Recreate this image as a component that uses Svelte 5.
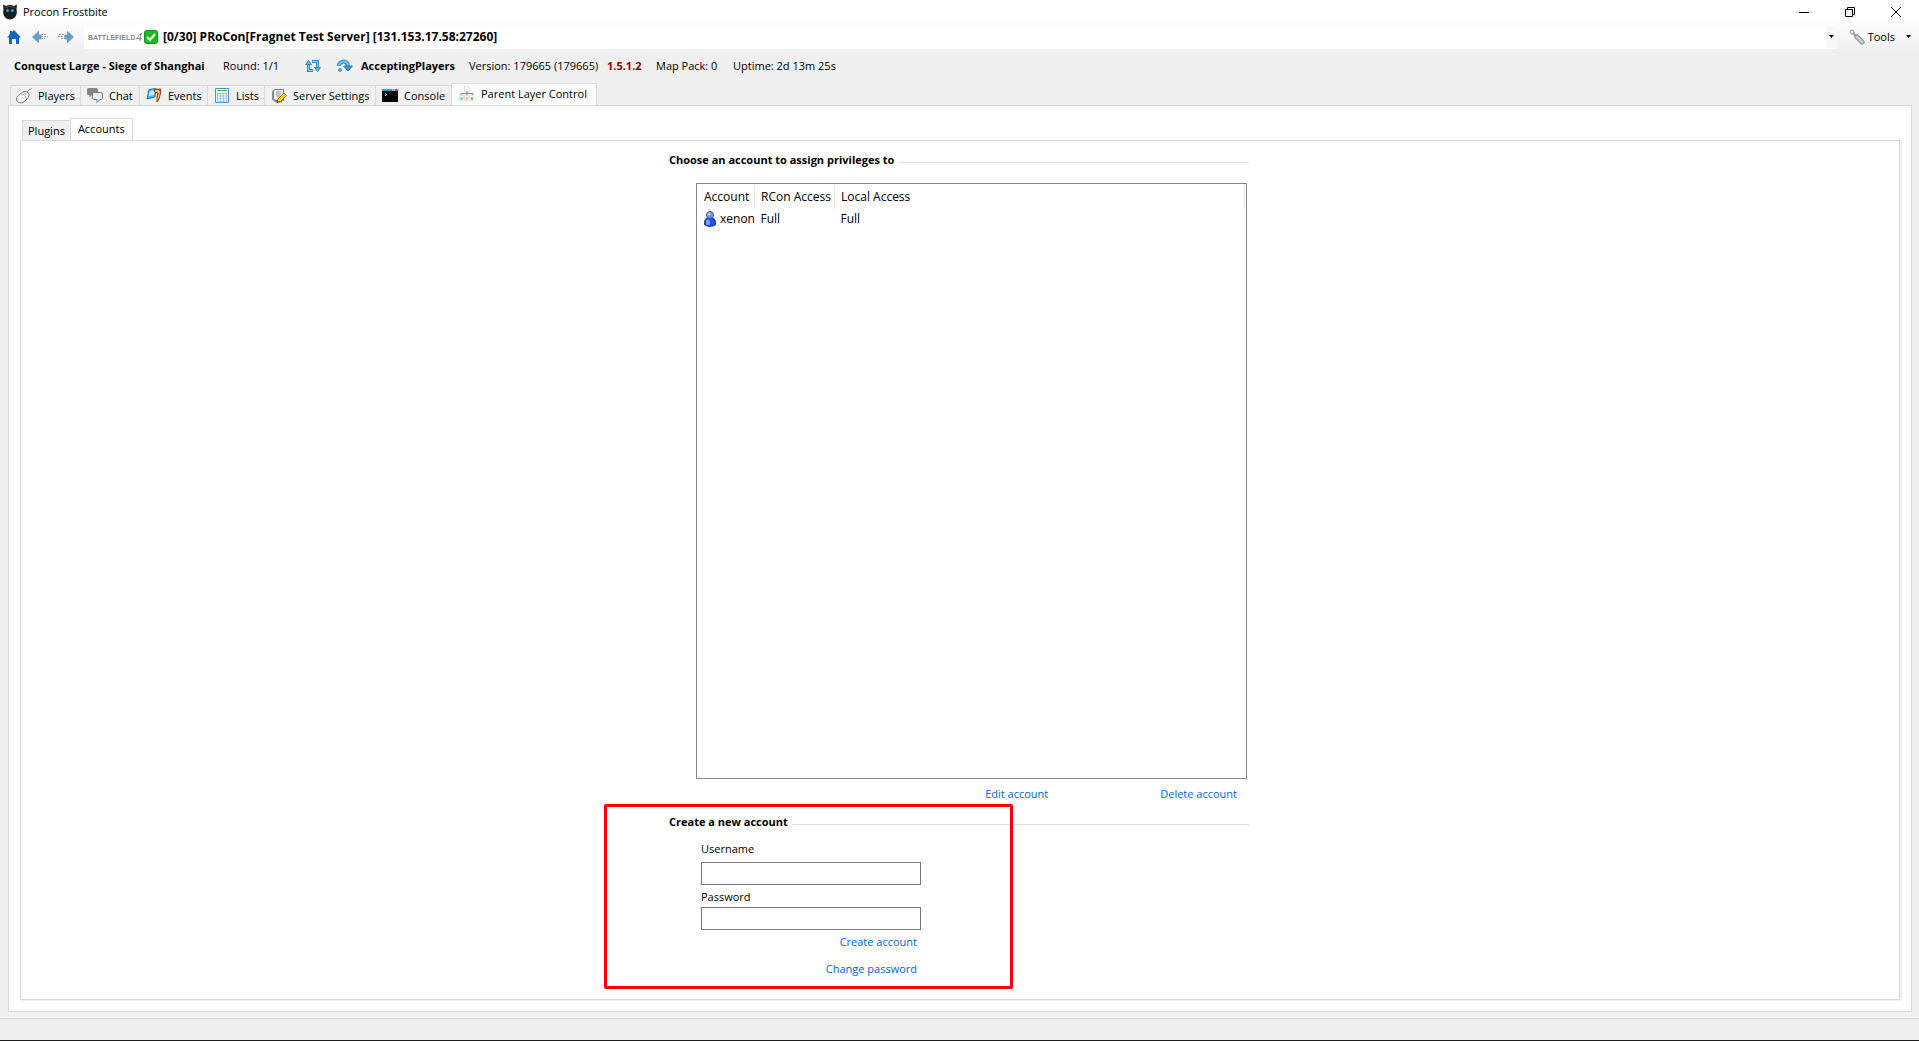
<script>
  const tabs = [
    { id: 'players', label: 'Players' },
    { id: 'chat', label: 'Chat' },
    { id: 'events', label: 'Events' },
    { id: 'lists', label: 'Lists' },
    { id: 'settings', label: 'Server Settings' },
    { id: 'console', label: 'Console' },
    { id: 'layer', label: 'Parent Layer Control' }
  ];
  const accounts = [{ name: 'xenon', rcon: 'Full', local: 'Full' }];

  let activeTab = $state('layer');
  let activeSub = $state('Accounts');
  let username = $state('');
  let password = $state('');
</script>

{#snippet tabIcon(id)}
  <svg class="icon" viewBox="0 0 16 16" aria-hidden="true">
    {#if id === 'players'}
      <path d="M10.500 5c0-2 1.500-1 2-2.500S14.500 2 15.500.5" fill="none" stroke="#777" />
      <path d="M1.500 8.500 6 4.500c2-1.500 6.500-1 7 1.500.2 1.500-.3 3-1.500 4.500L9 13c-2 2-5 2.300-7 1S0 10 1.500 8.500z" fill="#f6f6f6" stroke="#777" />
      <path d="M5 6c3 0 5 2 5.500 5M8 4.500l2 2.500" fill="none" stroke="#aaa" />
    {:else if id === 'chat'}
      <path d="M1.500 0h8A1.500 1.500 0 0 1 11 1.500v4A1.500 1.500 0 0 1 9.500 7H5l-2.500 3V7h-1A1.500 1.500 0 0 1 0 5.500v-4A1.500 1.500 0 0 1 1.500 0z" fill="#858585" />
      <path d="M7 4.500h7A1.500 1.500 0 0 1 15.500 6v4a1.500 1.500 0 0 1-1.500 1.500h-1L10 14.500v-3H7A1.500 1.500 0 0 1 5.500 10V6A1.500 1.500 0 0 1 7 4.500z" fill="#e6eef4" stroke="#76828c" />
    {:else if id === 'events'}
      <path d="m3 1.500 7-1-1 8.500-8 2z" fill="#45b6e8" stroke="#2771a8" />
      <path d="m4 3 5-.8-1 4.800-5.500 1z" fill="#c9f0ff" />
      <path d="M8.500 1.500 14.500 1v4l-1.500 6-2 3v-5l1-4-3.500-1z" fill="#f6c13c" stroke="#8b3a12" />
      <path d="M11.500 1h3v3z" fill="#c43216" />
    {:else if id === 'lists'}
      <path d="M1.500.5h13v14h-13z" fill="#f8fcff" stroke="#4c91cf" />
      <path d="M3 2h10v1H3z" fill="#56ae3d" />
      <path d="M3 5.500h10M3 8h10M3 10.500h10M3 13h10M3.500 5v9M6.500 5v9M9.500 5v9M12.500 5v9" stroke="#a4c7e8" fill="none" />
    {:else if id === 'settings'}
      <path d="M4 1.500h8.500v11h-8L2 10V3z" fill="#f2f2f2" stroke="#777" />
      <path d="M2 3v8l3 2.500h6" fill="none" stroke="#8a8a8a" stroke-width="2" />
      <path d="M5 4h5M5 6h5M5 8h4" stroke="#8e8e8e" />
      <path d="m6 14.500 1-3.500 6-6 2.500 2.500-6 6z" fill="#ffd01f" stroke="#a36c13" />
      <path d="m6 14.500.5-2 1.500 1.500z" fill="#333" />
    {:else if id === 'console'}
      <path d="M0 1h16v13H0z" fill="#000" />
      <path d="M0 1h16v2H0z" fill="#24a8dc" />
      <path d="M10 1.500h1v1h-1zM12 1.500h1v1h-1z" fill="#fff" />
      <path d="M13.500 1h2v2h-2z" fill="#e53a2c" />
      <path d="m3 5.500 1.500 1L3 8" fill="none" stroke="#fff" />
    {:else}
      <path d="M5.500 0h3.500l2 2v4h-5.500z" fill="#fafafa" stroke="#ddd" />
      <path d="M2 9.500V7.500h12v2M8 5.500v4" fill="none" stroke="#888" />
      <path d="M.5 9.500h4v5h-4zM5.700 9.500h4v5h-4zM11 9.500h4v5h-4z" fill="#fff" stroke="#ddd" />
      <path d="M1.500 11.500h2v2h-2z" fill="#22b4ee" />
      <path d="M6.700 11.500h2v2h-2z" fill="#ff9b21" />
      <path d="M12 11.500h2v2h-2z" fill="#16d621" />
    {/if}
  </svg>
{/snippet}

<div class="window">
  <header class="titlebar">
    <svg class="icon" viewBox="0 0 16 16" aria-hidden="true">
      <path d="M1 .5 4 2C6.500.8 9.500.8 12 2l3-1.500-.5 5C16 11 12.500 15.500 8 15.500S0 11 1.500 5.500z" fill="#1b1d21" />
      <path d="M3 4c3-2 7-2 10 0" fill="none" stroke="#55585e" />
      <circle cx="5.500" cy="6.500" r="1.500" fill="#19a9c9" />
      <circle cx="10.500" cy="6.500" r="1.500" fill="#19a9c9" />
    </svg>
    <h1>Procon Frostbite</h1>
    <div class="caption">
      <button aria-label="Minimize"><svg viewBox="0 0 12 12"><path d="M1 6.500h10" /></svg></button>
      <button aria-label="Restore"><svg viewBox="0 0 12 12"><path d="M1.500 3.500h7v7h-7zM3.500 3.500v-2h7v7h-2" /></svg></button>
      <button aria-label="Close"><svg viewBox="0 0 12 12"><path d="m1 1 10 10M11 1 1 11" /></svg></button>
    </div>
  </header>

  <nav class="toolbar">
    <button class="tool" aria-label="Home">
      <svg class="icon" viewBox="0 0 16 16"><path d="M8 1 15 8.500h-2V15h-3v-5H6v5H3V8.500H1L4 5V2h2v1z" fill="#1468b8" /></svg>
    </button>
    <button class="tool" aria-label="Back">
      <svg class="icon" viewBox="0 0 16 16"><path d="m.5 8 6-5.500V6H9v4H6.500v3.500z" fill="#48a9df" stroke="#8796a0" /><path d="M9 5.500h6M9 7.500h7M9 9.500h4" stroke="#97a4ac" stroke-dasharray="2 1" /></svg>
    </button>
    <button class="tool" aria-label="Forward">
      <svg class="icon" viewBox="0 0 16 16"><path d="m15.500 8-6-5.500V6H7v4h2.500v3.500z" fill="#48a9df" stroke="#8796a0" /><path d="M1 5.500h6M0 7.500h7M3 9.500h4" stroke="#97a4ac" stroke-dasharray="2 1" /></svg>
    </button>
    <button class="server" aria-label="Server">
      <svg class="brand" viewBox="0 0 54 12" aria-hidden="true">
        <text class="word" x="0" y="9">BATTLEFIELD</text>
        <text class="number" x="48" y="10">4</text>
      </svg>
      <svg class="check" viewBox="0 0 14 14" aria-hidden="true"><rect x=".5" y=".5" width="13" height="13" rx="2" fill="#12bf1c" stroke="#178c24" /><path d="m3 7 3 3 5-6" fill="none" stroke="#fff" stroke-width="2" /></svg>
      <strong>[0/30] PRoCon[Fragnet Test Server] [131.153.17.58:27260]</strong>
      <span class="drop"><svg class="arrow" viewBox="0 0 5 3"><path d="M0 0h5L2.500 3z" /></svg></span>
    </button>
    <button class="tools">
      <svg class="icon" viewBox="0 0 16 16" aria-hidden="true"><path d="m3 3 5 5" stroke="#8f979d" stroke-width="2" /><circle cx="3" cy="3" r="2" fill="#eee" stroke="#8f979d" /><path d="m8 8 5 5" stroke="#8c959c" stroke-width="5" stroke-linecap="round" /><path d="m8 8 5 5" stroke="#c3cbd1" stroke-width="3" stroke-linecap="round" /></svg>
      <span>Tools</span>
      <svg class="arrow" viewBox="0 0 5 3" aria-hidden="true"><path d="M0 0h5L2.500 3z" /></svg>
    </button>
  </nav>

  <section class="status">
    <strong>Conquest Large - Siege of Shanghai</strong>
    <span>Round: 1/1</span>
    <button class="tool" aria-label="Restart round">
      <svg class="icon" viewBox="0 0 16 16"><path d="M8 12.500H3.500V6M7 3.500h5.500V10" fill="none" stroke="#3b86b8" stroke-width="3" /><path d="M7.500 12.500H3.500V6M7.500 3.500h5V10" fill="none" stroke="#8fd0f2" /><path d="M.5 6.500 3.500 2.500 6.500 6.500zM9.500 9.500l3 4 3-4z" fill="#68b6e3" stroke="#3b86b8" /></svg>
    </button>
    <button class="tool" aria-label="Next round">
      <svg class="icon" viewBox="0 0 16 16"><path d="M2 8c0-5 8-7 9 0" fill="none" stroke="#3b86b8" stroke-width="4" /><path d="M2 8c0-5 8-7 9 0" fill="none" stroke="#79c2ea" stroke-width="2" /><path d="M6.500 8h9L11 13z" fill="#4197cd" stroke="#2e78ab" /><circle cx="3" cy="12" r="2" fill="#4c9dce" /></svg>
    </button>
    <strong>AcceptingPlayers</strong>
    <span>Version: 179665 (179665)</span>
    <strong class="outdated">1.5.1.2</strong>
    <span>Map Pack: 0</span>
    <span>Uptime: 2d 13m 25s</span>
  </section>

  <main>
    <div class="tabs" role="tablist">
      {#each tabs as tab}
        <button role="tab" class="tab {tab.id}" class:active={activeTab === tab.id} aria-selected={activeTab === tab.id} onclick={() => (activeTab = tab.id)}>
          {@render tabIcon(tab.id)}
          <span>{tab.label}</span>
        </button>
      {/each}
    </div>
    <div class="panel">
      <div class="tabs sub" role="tablist">
        {#each ['Plugins', 'Accounts'] as sub}
          <button role="tab" class="tab" class:active={activeSub === sub} aria-selected={activeSub === sub} onclick={() => (activeSub = sub)}>{sub}</button>
        {/each}
      </div>
      <div class="subpanel">
        <div class="content">
          <h2>Choose an account to assign privileges to</h2>
          <div class="list">
            <table>
              <thead>
                <tr><th class="c-account">Account</th><th class="c-rcon">RCon Access</th><th>Local Access</th></tr>
              </thead>
              <tbody>
                {#each accounts as account}
                  <tr>
                    <td>
                      <div class="user">
                        <svg viewBox="0 0 12 16" aria-hidden="true"><path d="M3 7C.5 8 .5 11 .5 13c0 3 11 3 11 0 0-2 0-5-2.500-6z" fill="#1e50e8" stroke="#1c3473" /><path d="M2 9.500c2-1.500 3-1 4 .5v4c-2 0-4 0-4-1z" fill="#6ea0ff" /><circle cx="6" cy="4" r="3.500" fill="#6f99e8" stroke="#44597f" /><circle cx="5" cy="3" r="1.500" fill="#b9d0fa" /></svg>
                        <span>{account.name}</span>
                      </div>
                    </td>
                    <td>{account.rcon}</td>
                    <td>{account.local}</td>
                  </tr>
                {/each}
              </tbody>
            </table>
          </div>
          <div class="actions">
            <a href="#edit">Edit account</a>
            <a href="#delete">Delete account</a>
          </div>
          <section class="create">
            <h2>Create a new account</h2>
            <form>
              <label for="username">Username</label>
              <input id="username" type="text" bind:value={username} />
              <label for="password">Password</label>
              <input id="password" type="password" bind:value={password} />
              <a href="#create">Create account</a>
              <a href="#password">Change password</a>
            </form>
            <div class="highlight"></div>
          </section>
        </div>
      </div>
    </div>
  </main>
  <footer></footer>
</div>

<style>
  :global(body) {
    margin: 0;
  }
  .window {
    display: flex;
    flex-direction: column;
    box-sizing: border-box;
    min-height: 100vh;
    background: #f0f0f0;
    color: #000;
    font: 11px/16px 'Open Sans', 'Noto Sans', sans-serif;
  }
  button,
  input {
    margin: 0;
    padding: 0;
    border: 0;
    background: none;
    color: inherit;
    font: inherit;
  }
  h1,
  h2 {
    margin: 0;
    font-size: 11px;
  }
  svg {
    display: block;
    flex: none;
  }
  .icon {
    width: 16px;
    height: 16px;
  }
  a {
    color: #0066dd;
    text-decoration: none;
  }
  .titlebar {
    display: flex;
    align-items: center;
    gap: 5px;
    height: 23px;
    padding-left: 2px;
    background: #fff;
  }
  h1 {
    font-weight: 400;
  }
  .caption {
    display: flex;
    margin-left: auto;
  }
  .caption button {
    display: grid;
    place-items: center;
    width: 46px;
    height: 20px;
  }
  .caption svg {
    width: 12px;
    height: 12px;
    fill: none;
    stroke: #000;
  }
  .toolbar {
    display: flex;
    align-items: center;
    height: 29px;
    box-sizing: border-box;
    padding: 0 8px 2px 6px;
    background: linear-gradient(#fcfcfc, #f0f0f0);
  }
  .toolbar .tool {
    width: 26px;
    display: grid;
    justify-content: start;
  }
  .server {
    display: flex;
    flex: 1;
    align-items: center;
    gap: 2px;
    height: 24px;
    padding-left: 4px;
    background: #fff;
    font-size: 12px;
    text-align: left;
  }
  .brand {
    width: 54px;
    height: 12px;
    fill: #8a8a8a;
  }
  .word {
    font: 700 7px 'Liberation Sans', sans-serif;
  }
  .number {
    font: italic 11px 'Liberation Sans', sans-serif;
  }
  .check {
    width: 14px;
    height: 14px;
  }
  .server strong {
    padding-left: 3px;
  }
  .drop {
    display: grid;
    place-items: center;
    width: 11px;
    height: 22px;
    margin-left: auto;
    background: #f8f8f8;
  }
  .arrow {
    width: 5px;
    height: 3px;
  }
  .tools {
    display: flex;
    align-items: center;
    gap: 3px;
    padding-left: 12px;
  }
  .tools .arrow {
    margin-left: 8px;
  }
  .status {
    display: grid;
    grid-template-columns: 209px 82px 32px 24px 108px 138px 49px 77px auto;
    align-items: center;
    height: 28px;
    padding-left: 14px;
    white-space: nowrap;
  }
  .outdated {
    color: #8b0000;
  }
  main {
    display: flex;
    flex: 1;
    flex-direction: column;
    padding: 3px 7px 6px 8px;
  }
  .tabs {
    display: flex;
    align-items: flex-end;
    height: 22px;
    padding-left: 2px;
  }
  .tab {
    display: flex;
    align-items: center;
    gap: 6px;
    box-sizing: border-box;
    height: 20px;
    padding: 0 5px 0 6px;
    border: 1px solid #d9d9d9;
    border-width: 1px 1px 0 0;
    white-space: nowrap;
  }
  .tab:first-child {
    border-left-width: 1px;
    padding-left: 5px;
  }
  .players {
    min-width: 71px;
  }
  .chat {
    min-width: 59px;
  }
  .events {
    min-width: 68px;
  }
  .lists {
    min-width: 57px;
  }
  .settings {
    min-width: 111px;
  }
  .console {
    min-width: 76px;
  }
  .layer {
    min-width: 146px;
  }
  .tab.active {
    height: 23px;
    margin: 0 0 -1px -1px;
    padding: 0 7px 3px;
    border-left-width: 1px;
    background: #fff;
  }
  .panel {
    display: flex;
    flex: 1;
    flex-direction: column;
    padding: 12px 11px 11px;
    border: 1px solid #d9d9d9;
    background: #fff;
  }
  .sub .tab:not(.active) {
    background: #f0f0f0;
  }
  .subpanel {
    display: flex;
    flex: 1;
    justify-content: center;
    border: 1px solid #d9d9d9;
    box-shadow: 2px 1px 0 #f0f0f0;
    padding-right: 2px;
  }
  .content {
    display: flex;
    flex-direction: column;
    width: 580px;
    padding: 11px 0;
  }
  h2 {
    display: flex;
    align-items: center;
    gap: 4px;
  }
  h2::after {
    content: '';
    flex: 1;
    height: 1px;
    margin-top: 4px;
    background: #e0e0e0;
  }
  .list {
    flex: 1;
    margin: 15px 2px 0 27px;
    padding: 1px;
    border: 1px solid #828790;
    font-size: 12px;
  }
  table {
    width: 100%;
    border-collapse: collapse;
    table-layout: fixed;
  }
  th,
  td {
    padding: 0 0 0 6px;
    font-weight: 400;
    text-align: left;
    white-space: nowrap;
  }
  th {
    height: 24px;
    border-right: 1px solid #e5e5e5;
  }
  td {
    height: 20px;
  }
  .c-account {
    width: 50px;
  }
  .c-rcon {
    width: 73px;
  }
  .user {
    display: flex;
    gap: 4px;
  }
  .user svg {
    width: 12px;
    height: 16px;
  }
  .actions {
    display: flex;
    justify-content: flex-end;
    gap: 112px;
    padding: 7px 12px 12px 0;
  }
  .create {
    position: relative;
  }
  form {
    display: flex;
    flex-direction: column;
    align-items: flex-start;
    width: 220px;
    padding: 11px 0 0 32px;
  }
  input {
    box-sizing: border-box;
    width: 100%;
    height: 23px;
    padding: 0 4px;
    border: 1px solid #7a7a7a;
    background: #fff;
  }
  #username {
    margin: 5px 0 4px;
  }
  #password {
    margin: 2px 0 4px;
  }
  form a {
    align-self: flex-end;
    margin-right: 4px;
    padding-bottom: 11px;
  }
  .highlight {
    position: absolute;
    top: -10px;
    left: -65px;
    box-sizing: border-box;
    width: 409px;
    height: 185px;
    border: 3px solid #f00;
    border-radius: 2px;
    pointer-events: none;
  }
  footer {
    height: 21px;
    border-top: 1px solid #d7d7d7;
    border-bottom: 1px solid #1b1b1b;
  }
</style>
